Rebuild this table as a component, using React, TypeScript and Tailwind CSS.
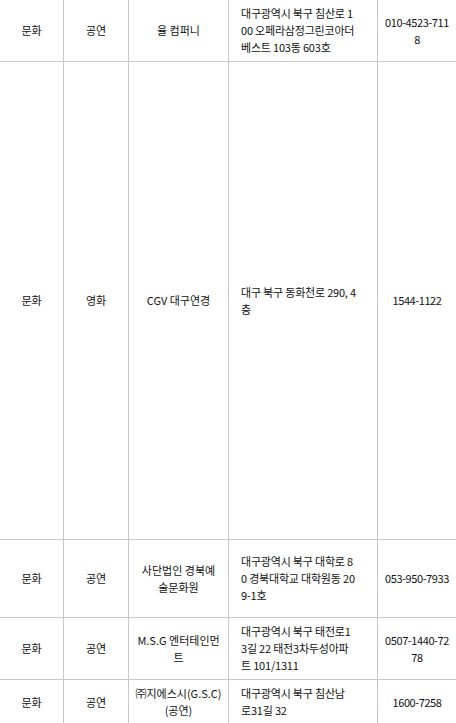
const rows: {
  h: string;
  cat: string;
  type: string;
  name: string[];
  addr: string[];
  tel: string[];
}[] = [
  {
    h: "h-[62px]",
    cat: "문화",
    type: "공연",
    name: ["율 컴퍼니"],
    addr: ["대구광역시 북구 침산로 1", "00 오페라삼정그린코아더", "베스트 103동 603호"],
    tel: ["010-4523-711", "8"],
  },
  {
    h: "h-[478px]",
    cat: "문화",
    type: "영화",
    name: ["CGV 대구연경"],
    addr: ["대구 북구 동화천로 290, 4", "층"],
    tel: ["1544-1122"],
  },
  {
    h: "h-[78px]",
    cat: "문화",
    type: "공연",
    name: ["사단법인 경북예", "술문화원"],
    addr: ["대구광역시 북구 대학로 8", "0 경북대학교 대학원동 20", "9-1호"],
    tel: ["053-950-7933"],
  },
  {
    h: "h-[62px]",
    cat: "문화",
    type: "공연",
    name: ["M.S.G 엔터테인먼", "트"],
    addr: ["대구광역시 북구 태전로1", "3길 22 태전3차두성아파", "트 101/1311"],
    tel: ["0507-1440-72", "78"],
  },
  {
    h: "h-[45px]",
    cat: "문화",
    type: "공연",
    name: ["㈜지에스시(G.S.C)", "(공연)"],
    addr: ["대구광역시 북구 침산남", "로31길 32"],
    tel: ["1600-7258"],
  },
];

function Lines({ lines }: { lines: string[] }) {
  return (
    <div>
      {lines.map((l, i) => (
        <div key={i} className="whitespace-nowrap">
          {l}
        </div>
      ))}
    </div>
  );
}

export default function App() {
  return (
    <div
      className="w-[456px] h-[723px] overflow-hidden bg-white text-[11px] leading-[17px] text-[#111]"
      style={{ fontFamily: '"Noto Sans CJK KR", "Noto Sans", sans-serif' }}
    >
      {rows.map((r, i) => (
        <div
          key={i}
          className={`grid grid-cols-[64px_65px_100px_149px_1fr] border-b border-[#c8c8c8] ${r.h}`}
        >
          <div className="flex items-center justify-center border-r border-[#c8c8c8]">
            {r.cat}
          </div>
          <div className="flex items-center justify-center border-r border-[#c8c8c8]">
            {r.type}
          </div>
          <div className="flex items-center justify-center border-r border-[#c8c8c8] text-center">
            <Lines lines={r.name} />
          </div>
          <div className="flex items-center border-r border-[#c8c8c8] pl-3 tracking-[-0.2px]">
            <Lines lines={r.addr} />
          </div>
          <div className="flex items-center justify-center text-center tracking-[-0.4px]">
            <Lines lines={r.tel} />
          </div>
        </div>
      ))}
    </div>
  );
}
